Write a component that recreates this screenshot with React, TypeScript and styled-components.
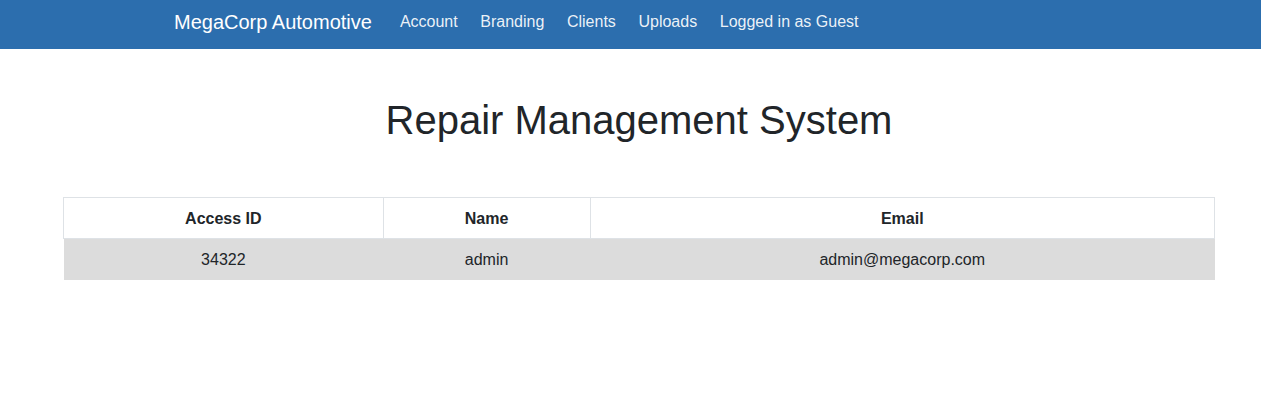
import React from "react";
import styled, { createGlobalStyle } from "styled-components";

const Global = createGlobalStyle`
  html, body { margin: 0; padding: 0; background: #fff; }
  body { font-family: "Liberation Sans", Arial, sans-serif; color: #212529; }
`;

const NavBar = styled.nav`
  height: 49px;
  background: #2c6eae;
  display: flex;
  align-items: center;
  padding-left: 174px;
  box-sizing: border-box;
`;

const Brand = styled.a`
  font-size: 20px;
  color: #fff;
  text-decoration: none;
  margin-right: 28px;
  line-height: 1;
  padding-bottom: 5px;
`;

const NavLinks = styled.div`
  display: flex;
  gap: 22.6px;
  padding-bottom: 5px;
`;

const NavLink = styled.a`
  font-size: 16px;
  color: rgba(255, 255, 255, 0.92);
  text-decoration: none;
  line-height: 1;
`;

const Main = styled.main`
  padding: 0 46px 0 63px;
`;

const Title = styled.h1`
  margin: 47px 0 53px;
  text-align: center;
  font-size: 40px;
  font-weight: 400;
  line-height: 1.2;
`;

const Table = styled.table`
  width: 1152px;
  border-collapse: collapse;
  font-size: 16px;
`;

const Th = styled.th<{ $w: number }>`
  width: ${(p) => p.$w}px;
  height: 41px;
  padding: 2px 0 0;
  border: 1px solid #dee2e6;
  font-weight: 700;
  text-align: center;
  box-sizing: border-box;
`;

const Row = styled.tr`
  background: #dcdcdc;
`;

const Td = styled.td`
  height: 41px;
  padding: 0;
  text-align: center;
`;

export default function App() {
  return (
    <>
      <Global />
      <NavBar>
        <Brand href="#">MegaCorp Automotive</Brand>
        <NavLinks>
          <NavLink href="#">Account</NavLink>
          <NavLink href="#">Branding</NavLink>
          <NavLink href="#">Clients</NavLink>
          <NavLink href="#">Uploads</NavLink>
          <NavLink href="#">Logged in as Guest</NavLink>
        </NavLinks>
      </NavBar>
      <Main>
        <Title>Repair Management System</Title>
        <Table>
          <thead>
            <tr>
              <Th $w={320}>Access ID</Th>
              <Th $w={207}>Name</Th>
              <Th $w={625}>Email</Th>
            </tr>
          </thead>
          <tbody>
            <Row>
              <Td>34322</Td>
              <Td>admin</Td>
              <Td>admin@megacorp.com</Td>
            </Row>
          </tbody>
        </Table>
      </Main>
    </>
  );
}
